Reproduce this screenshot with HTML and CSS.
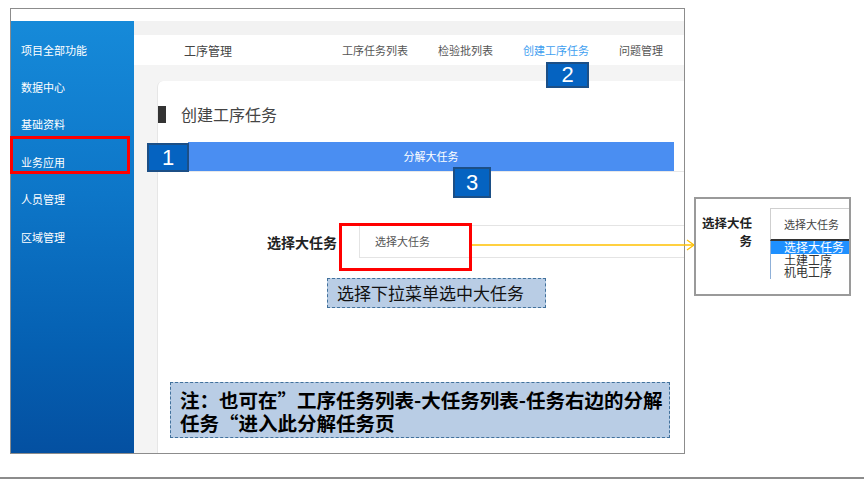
FILE: index.html
```html
<!DOCTYPE html>
<html lang="zh">
<head>
<meta charset="utf-8">
<title>创建工序任务</title>
<link rel="stylesheet" href="styles.css">
</head>
<body>
<div class="slide">
  <div class="frame">
    <div class="frame-top"></div>
    <div class="app">
      <aside class="sidebar">
        <div class="side-item">项目全部功能</div>
        <div class="side-item">数据中心</div>
        <div class="side-item">基础资料</div>
        <div class="side-item">业务应用</div>
        <div class="side-item">人员管理</div>
        <div class="side-item">区域管理</div>
      </aside>
      <main class="main">
        <div class="strip"></div>
        <nav class="nav">
          <span class="nav-title">工序管理</span>
          <div class="nav-links">
            <span class="nav-link">工序任务列表</span>
            <span class="nav-link">检验批列表</span>
            <span class="nav-link active">创建工序任务</span>
            <span class="nav-link">问题管理</span>
          </div>
        </nav>
        <div class="content">
          <section class="card">
            <h1 class="card-title">创建工序任务</h1>
            <div class="tabs"><div class="tab">分解大任务</div></div>
            <div class="form-row">
              <span class="form-label">选择大任务</span>
              <div class="select">选择大任务</div>
            </div>
          </section>
        </div>
      </main>
    </div>
  </div>

  <div class="hl hl-1"></div>
  <div class="hl hl-2"></div>
  <div class="badge badge-1">1</div>
  <div class="badge badge-2">2</div>
  <div class="badge badge-3">3</div>

  <svg class="arrow" width="224" height="14" viewBox="0 0 224 14">
    <line x1="0" y1="7" x2="222" y2="7" stroke="#ffc000" stroke-width="1.5"/>
    <polyline points="215,2 222,7 215,12" fill="none" stroke="#ffc000" stroke-width="1.3"/>
  </svg>

  <div class="callout callout-1">选择下拉菜单选中大任务</div>
  <div class="callout note">注：也可在”工序任务列表-大任务列表-任务右边的分解<br>任务“进入此分解任务页</div>

  <div class="popup">
    <div class="popup-label">选择大任务</div>
    <div class="popup-select">
      <div class="popup-box">选择大任务</div>
      <ul class="popup-list">
        <li class="selected">选择大任务</li>
        <li>土建工序</li>
        <li>机电工序</li>
      </ul>
    </div>
  </div>
</div>
</body>
</html>
```
FILE: styles.css
```css
* { box-sizing: border-box; }

html, body {
  margin: 0;
  padding: 0;
  background: #fff;
}

body {
  font-family: "Noto Sans CJK SC", "Liberation Sans", sans-serif;
  color: #333;
}

.slide {
  position: relative;
  width: 864px;
  height: 479px;
  padding: 8px 0 0 10px;
  border-bottom: 2px solid #8c8c8c;
  overflow: hidden;
}

.frame {
  width: 675px;
  height: 446px;
  border: 1px solid #8c8c8c;
  display: flex;
  flex-direction: column;
  overflow: hidden;
  background: #fff;
}

.frame-top {
  height: 12px;
  flex: none;
}

.app {
  flex: 1;
  display: flex;
  min-height: 0;
}

.sidebar {
  width: 123px;
  flex: none;
  padding-top: 10px;
  background: linear-gradient(180deg, #168ad9 0%, #0d76c8 40%, #0560b2 75%, #0450a1 100%);
}

.side-item {
  height: 37.4px;
  display: flex;
  align-items: center;
  padding-left: 10px;
  color: #fff;
  font-size: 11px;
}

.main {
  flex: 1;
  display: flex;
  flex-direction: column;
  min-width: 0;
  background: #f4f4f4;
}

.strip {
  height: 14px;
  flex: none;
  background: #f2f2f2;
}

.nav {
  height: 30px;
  flex: none;
  background: #fff;
  display: flex;
  align-items: center;
  padding: 0 21px 0 50px;
}

.nav-title {
  font-size: 12px;
  color: #444;
}

.nav-links {
  margin-left: auto;
  display: flex;
  gap: 30px;
}

.nav-link {
  font-size: 11px;
  color: #555;
}

.nav-link.active {
  color: #3fa0f0;
}

.content {
  flex: 1;
  display: flex;
  padding: 16px 0 0 23px;
  min-height: 0;
}

.card {
  flex: 1;
  background: #fff;
  border-left: 1px solid #e6e6e6;
  border-radius: 6px 0 0 0;
  padding-top: 25px;
}

.card-title {
  margin: 0;
  display: flex;
  align-items: center;
  gap: 15px;
  font-size: 16px;
  line-height: 17px;
  font-weight: normal;
  color: #444;
}

.card-title::before {
  content: "";
  width: 8px;
  height: 17px;
  background: #333;
}

.tabs {
  margin-top: 19px;
  padding: 0 10px 0 30px;
  border-bottom: 1px solid #e8e8e8;
}

.tab {
  height: 29px;
  line-height: 29px;
  background: #4a8ef2;
  color: #fff;
  font-size: 11px;
  text-align: center;
}

.form-row {
  margin-top: 53px;
  display: flex;
  align-items: center;
  padding-left: 109px;
}

.form-label {
  font-size: 14px;
  font-weight: bold;
  color: #222;
  white-space: nowrap;
}

.select {
  flex: 1;
  margin-left: 22px;
  height: 33px;
  line-height: 31px;
  border: 1px solid #e4e4e4;
  border-right: none;
  padding-left: 15px;
  font-size: 11px;
  color: #555;
}

/* overlays */
.hl {
  position: absolute;
  border: 3px solid #ff0000;
}

.hl-1 { left: 10px; top: 136px; width: 120px; height: 38px; }
.hl-2 { left: 339px; top: 223px; width: 133px; height: 48px; }

.badge {
  position: absolute;
  background: #0563c1;
  border: 2px solid #1c4f86;
  color: #fff;
  font-family: "Liberation Sans", sans-serif;
  font-size: 22px;
  display: flex;
  align-items: center;
  justify-content: center;
}

.badge-1 { left: 147px; top: 143px; width: 42px; height: 29px; }
.badge-2 { left: 546px; top: 62px; width: 43px; height: 26px; }
.badge-3 { left: 453px; top: 167px; width: 38px; height: 31px; }

.arrow {
  position: absolute;
  left: 472px;
  top: 238px;
}

.callout {
  position: absolute;
  background: #b9cde5;
  border: 1px dashed #41719c;
  color: #111;
  white-space: nowrap;
}

.callout-1 {
  left: 327px;
  top: 278px;
  width: 219px;
  height: 30px;
  padding-left: 9px;
  font-size: 17px;
  line-height: 28px;
}

.note {
  left: 170px;
  top: 382px;
  width: 500px;
  height: 56px;
  padding: 5px 0 0 9px;
  font-size: 19.5px;
  line-height: 23px;
  font-weight: bold;
  color: #000;
}

.popup {
  position: absolute;
  left: 694px;
  top: 197px;
  width: 157px;
  height: 99px;
  border: 2px solid #9a9a9a;
  background: #fff;
  display: flex;
  padding: 9px 0 0 4px;
  overflow: hidden;
}

.popup-label {
  width: 52px;
  flex: none;
  margin-top: 6px;
  font-size: 12.5px;
  line-height: 18px;
  font-weight: bold;
  text-align: right;
  color: #222;
}

.popup-select {
  flex: 1;
  margin-left: 18px;
}

.popup-box {
  height: 33px;
  border-top: 1px solid #cfcfcf;
  border-left: 1px solid #cfcfcf;
  border-bottom: 2px solid #333;
  padding-left: 13px;
  font-size: 11px;
  line-height: 30px;
  color: #444;
}

.popup-list {
  margin: 0;
  padding: 0;
  list-style: none;
  border-left: 1px solid #8fb0d8;
  height: 38px;
}

.popup-list li {
  font-size: 12px;
  line-height: 12.5px;
  padding-left: 13px;
  color: #333;
}

.popup-list li.selected {
  background: #1e90ff;
  color: #fff;
}
```
